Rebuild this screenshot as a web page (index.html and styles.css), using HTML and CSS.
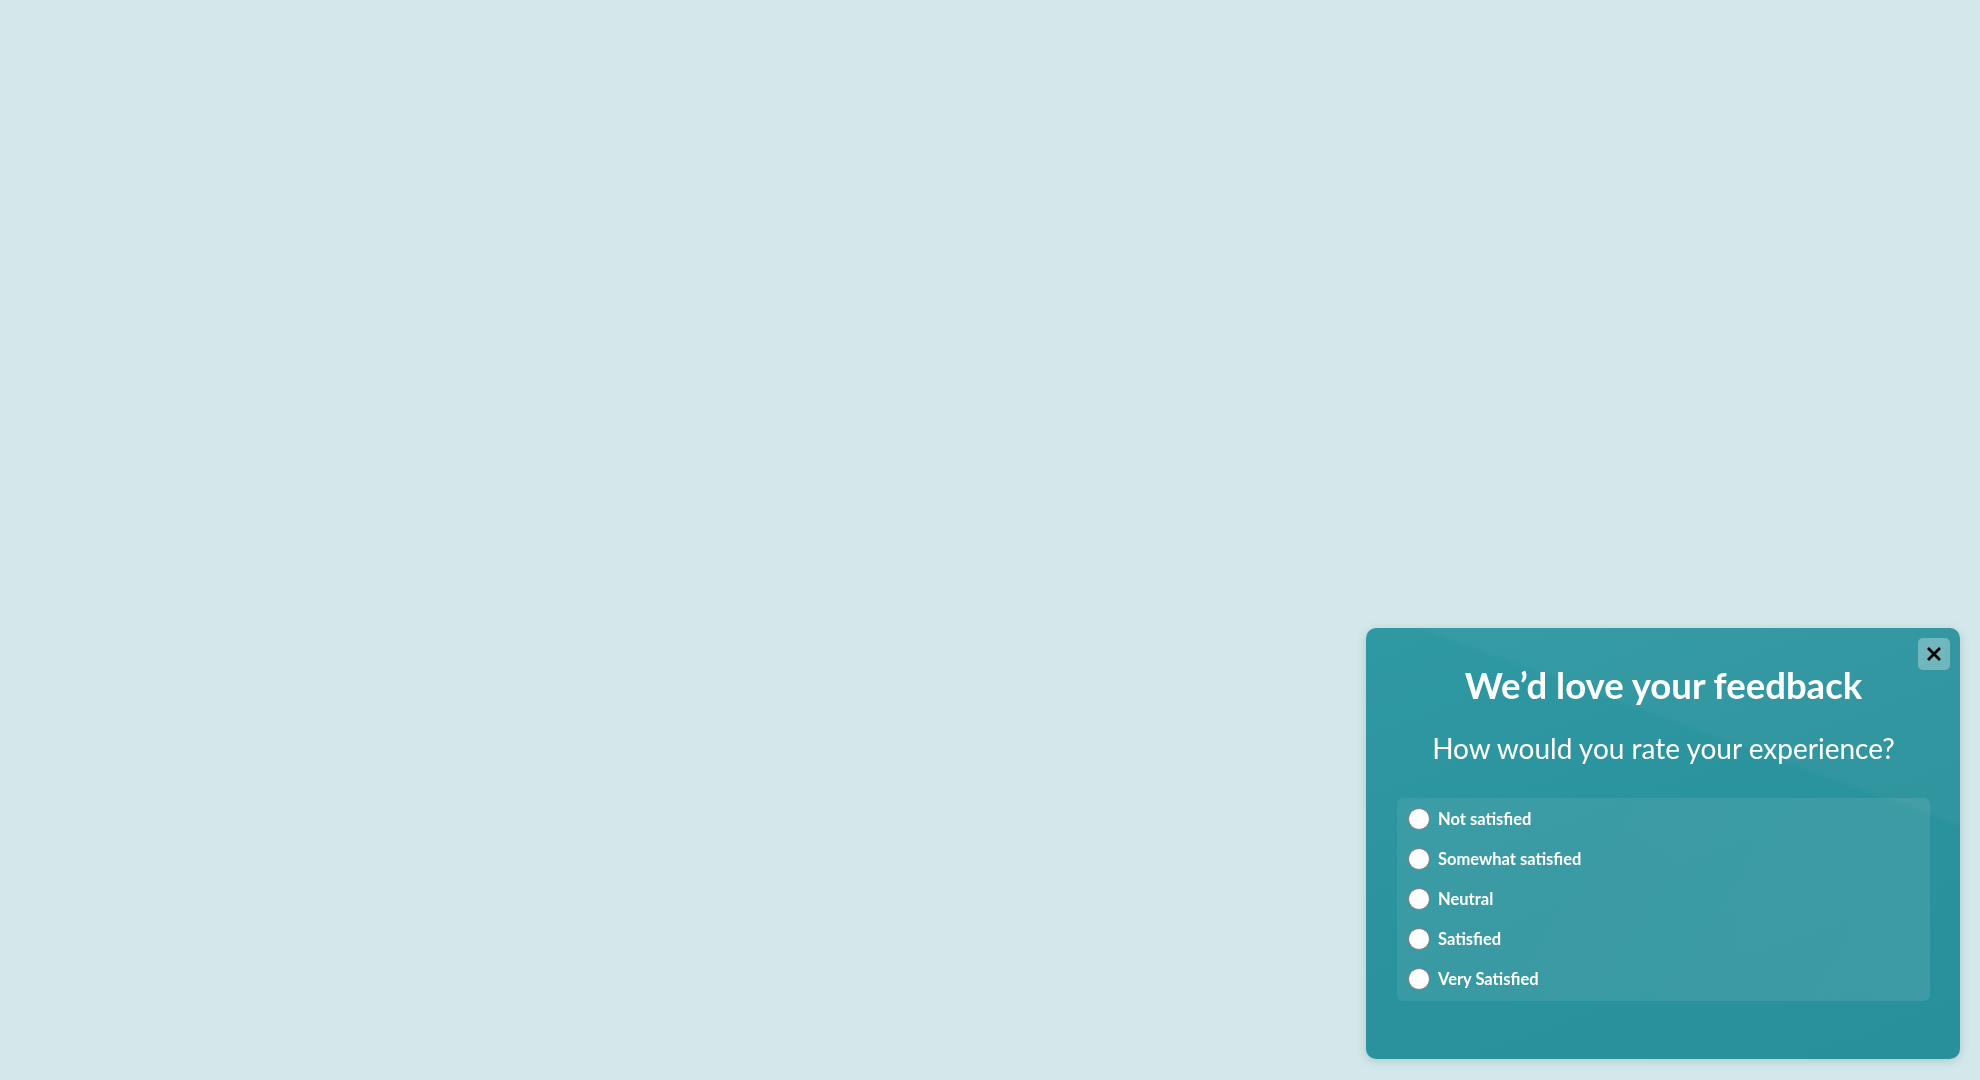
FILE: index.html
```html
<!DOCTYPE html>
<html lang="en">
<head>
<meta charset="utf-8">
<title>Feedback</title>
<link rel="stylesheet" href="styles.css">
</head>
<body>
<div class="page"></div>
<section class="feedback">
  <button class="close" aria-label="Close">
    <svg viewBox="0 0 14 14" width="14" height="14"><path d="M2 2 L12 12 M12 2 L2 12" stroke="#000" stroke-width="2.8" stroke-linecap="square"/></svg>
  </button>
  <h1 class="title">We’d love your feedback</h1>
  <p class="question">How would you rate your experience?</p>
  <div class="options">
    <label class="option"><span class="radio"></span><span class="label">Not satisfied</span></label>
    <label class="option"><span class="radio"></span><span class="label">Somewhat satisfied</span></label>
    <label class="option"><span class="radio"></span><span class="label">Neutral</span></label>
    <label class="option"><span class="radio"></span><span class="label">Satisfied</span></label>
    <label class="option"><span class="radio"></span><span class="label">Very Satisfied</span></label>
  </div>
</section>
</body>
</html>
```
FILE: styles.css
```css
html, body {
  margin: 0;
  padding: 0;
  height: 100%;
}
body {
  background: #d4e8eb;
  font-family: Lato, "Open Sans", sans-serif;
  overflow: hidden;
}
.page {
  height: 100%;
}
.feedback {
  position: fixed;
  right: 20px;
  bottom: 21px;
  width: 594px;
  height: 431px;
  box-sizing: border-box;
  padding: 28px 30px 0 31px;
  border-radius: 10px;
  color: #fff;
  background:
    linear-gradient(200deg, rgba(255,255,255,0.03) 0%, rgba(255,255,255,0.03) 30%, rgba(255,255,255,0) 31%),
    linear-gradient(160deg, #2f99a3 0%, #2b939d 45%, #28909a 100%);
  box-shadow: 0 2px 10px rgba(40, 110, 120, 0.25);
  overflow: hidden;
}
.close {
  position: absolute;
  top: 10px;
  right: 10px;
  width: 32px;
  height: 32px;
  padding: 0;
  border: 0;
  border-radius: 5px;
  background: rgba(255, 255, 255, 0.3);
  display: flex;
  align-items: center;
  justify-content: center;
  cursor: pointer;
}
.title {
  margin: 0;
  text-align: center;
  font-size: 36.5px;
  font-weight: 700;
  line-height: 58px;
}
.question {
  margin: 6px 0 0;
  text-align: center;
  font-size: 28px;
  font-weight: 400;
  line-height: 56px;
}
.options {
  margin-top: 22px;
  border-radius: 6px;
  padding: 1px 10px 2px 11px;
  display: flex;
  flex-direction: column;
  background: linear-gradient(120deg, rgba(255,255,255,0.07), rgba(255,255,255,0.09));
}
.option {
  display: flex;
  align-items: center;
  gap: 8px;
  height: 40px;
}
.radio {
  width: 22px;
  height: 22px;
  border-radius: 50%;
  background: #fff;
  border: 1px solid #7d7d85;
  box-sizing: border-box;
  flex: none;
}
.label {
  font-size: 16.5px;
  font-weight: 700;
}
```
